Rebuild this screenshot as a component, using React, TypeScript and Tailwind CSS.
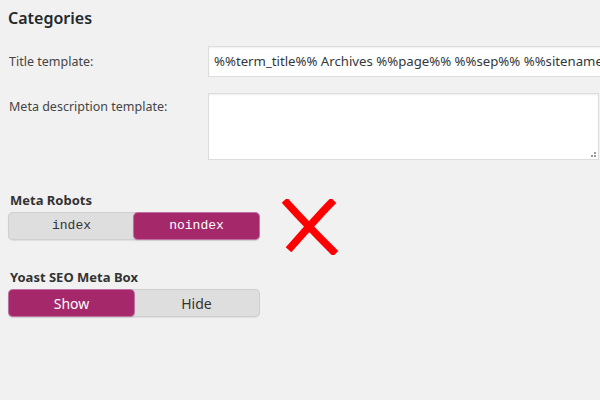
const font = "font-['Segoe_UI','Noto_Sans','Open_Sans',sans-serif]";

type ToggleProps = {
  left: string;
  right: string;
  active: "left" | "right";
  mono?: boolean;
};

const Toggle = ({ left, right, active, mono }: ToggleProps) => {
  const on = "bg-[#a4286a] text-white shadow-[0_0_0_1px_#c06fa0,0_1px_2px_rgba(0,0,0,0.25)]";
  const off = "text-[#333]";
  const txt = mono
    ? "font-['Liberation_Mono','DejaVu_Sans_Mono',monospace] text-[13px]"
    : "text-[14px]";
  return (
    <div className="flex w-[252px] h-[28px] rounded-[5px] bg-[#dedede] p-px shadow-[inset_0_0_0_1px_#cfcfcf,0_1px_1px_rgba(0,0,0,0.08)]">
      <div
        className={`flex-1 flex items-center justify-center rounded-[4px] ${txt} ${
          active === "left" ? on : off
        }`}
      >
        {left}
      </div>
      <div
        className={`flex-1 flex items-center justify-center rounded-[4px] ${txt} ${
          active === "right" ? on : off
        }`}
      >
        {right}
      </div>
    </div>
  );
};

const App = () => {
  return (
    <div className={`w-[600px] h-[400px] overflow-hidden bg-[#f1f1f1] text-[#444] ${font}`}>
      <h2 className="pt-[6px] pl-[8px] text-[16px] font-semibold text-[#23282d] leading-[24px]">
        Categories
      </h2>

      <div className="flex mt-[16px] pl-[9px]">
        <label className="w-[199px] shrink-0 pt-[7px] text-[12.5px]">Title template:</label>
        <div className="w-[420px] h-[31px] shrink-0 bg-white border border-[#ddd] shadow-[inset_0_1px_2px_rgba(0,0,0,0.07)] flex items-center pl-[5px] text-[13.2px] text-[#32373c] whitespace-nowrap overflow-hidden">
          %%term_title%% Archives %%page%% %%sep%% %%sitename%%
        </div>
      </div>

      <div className="flex mt-[16px] pl-[9px]">
        <label className="w-[199px] shrink-0 pt-[5px] text-[12.5px]">Meta description template:</label>
        <div className="relative w-[391px] h-[67px] shrink-0 bg-white border border-[#ddd] shadow-[inset_0_1px_2px_rgba(0,0,0,0.07)]">
          <svg className="absolute right-[1px] bottom-[1px]" width="8" height="8" viewBox="0 0 8 8">
            <rect x="5" y="2" width="2" height="2" fill="#999" />
            <rect x="2" y="5" width="2" height="2" fill="#999" />
            <rect x="5" y="5" width="2" height="2" fill="#999" />
          </svg>
        </div>
      </div>

      <div className="flex mt-[32px] pl-[8px]">
        <div>
          <div className="pl-[2px] text-[13px] font-bold text-[#333] leading-[16px]">Meta Robots</div>
          <div className="mt-[4px]">
            <Toggle left="index" right="noindex" active="right" mono />
          </div>
        </div>
        <svg className="ml-[22px] mt-[7px]" width="58" height="56" viewBox="0 0 58 56">
          <path d="M5 4 C15 15 32 33 51 52" stroke="#f00" strokeWidth="7.5" fill="none" strokeLinecap="square" />
          <path d="M49 4 C39 14 25 30 9 48" stroke="#f00" strokeWidth="7.5" fill="none" strokeLinecap="square" />
        </svg>
      </div>

      <div className="mt-[14px] pl-[8px]">
        <div className="pl-[2px] text-[13px] font-bold text-[#333] leading-[16px]">Yoast SEO Meta Box</div>
        <div className="mt-[4px]">
          <Toggle left="Show" right="Hide" active="left" />
        </div>
      </div>
    </div>
  );
};

export default App;
